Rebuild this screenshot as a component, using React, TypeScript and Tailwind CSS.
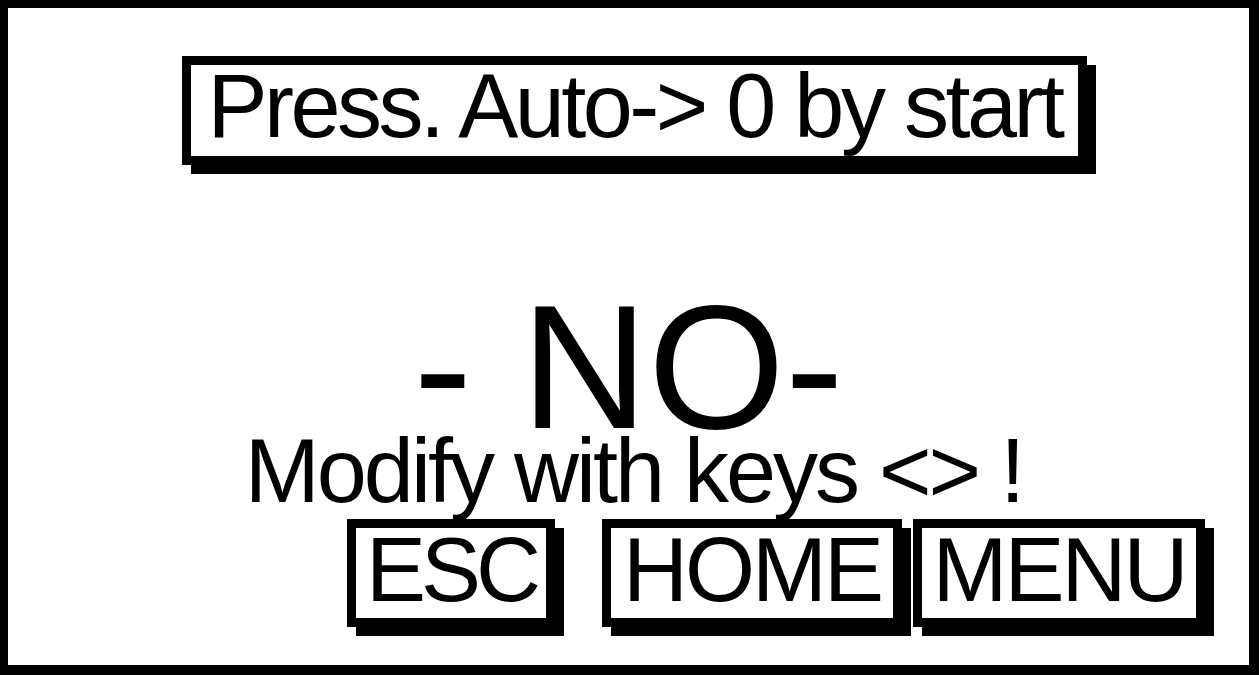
const font = { fontFamily: '"Liberation Sans", Arial, sans-serif' };

function KeyBox({ label, width, className }: { label: string; width: string; className?: string }) {
  return (
    <div
      className={`${width} ${className ?? ""} box-border border-[9px] border-black bg-white shadow-[9px_9px_0_#000] h-[108px] pt-[6px] text-center text-[90px] leading-[72px] tracking-[-3px] text-black whitespace-nowrap`}
    >
      {label}
    </div>
  );
}

export default function App() {
  return (
    <div
      className="w-[1259px] h-[675px] box-border bg-white border-black border-t-[8px] border-l-[8px] border-r-[10px] border-b-[10px] overflow-hidden flex flex-col text-black"
      style={font}
    >
      <div className="ml-[174px] mt-[48px] w-[905px] h-[109px] box-border border-[9px] border-black shadow-[9px_9px_0_#000] pt-[5px] text-center text-[90px] leading-[72px] tracking-[-3.5px] whitespace-nowrap">
        Press. Auto-&gt; 0 by start
      </div>

      <div className="mt-[134px] h-[136px] text-center text-[176px] leading-[136px] whitespace-nowrap">
        - NO-
      </div>

      <div className="relative z-10 h-[72px] pl-[10px] text-center text-[90px] leading-[72px] tracking-[-3px] whitespace-nowrap">
        Modify with keys &lt;&gt; !
      </div>

      <div className="mt-[12px] ml-[339px] flex items-start">
        <KeyBox label="ESC" width="w-[208px]" className="tracking-[-5px]" />
        <KeyBox label="HOME" width="w-[300px]" className="ml-[47px]" />
        <KeyBox label="MENU" width="w-[292px]" className="ml-[11px]" />
      </div>
    </div>
  );
}
